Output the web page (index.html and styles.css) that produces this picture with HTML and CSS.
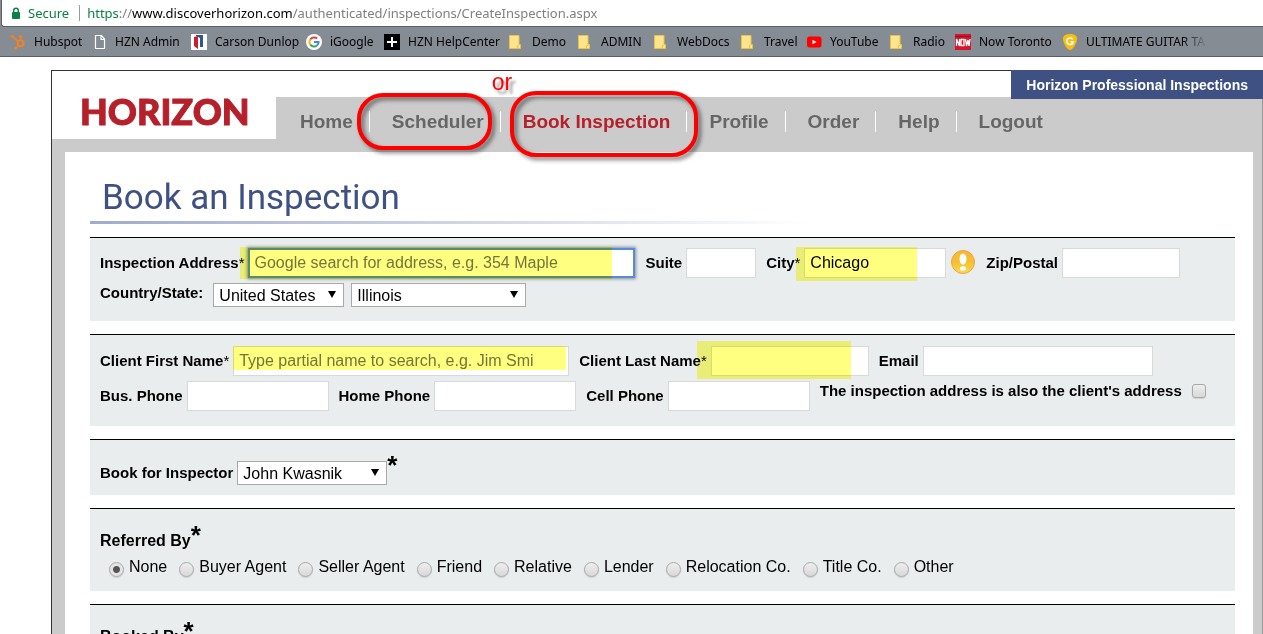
FILE: index.html
```html
<!DOCTYPE html>
<html lang="en">
<head>
<meta charset="utf-8">
<title>Book an Inspection</title>
<link rel="stylesheet" href="styles.css">
</head>
<body>
<div class="browser">
  <div class="address">
    <svg class="lock" width="10" height="13" viewBox="0 0 10 13"><rect x="1" y="5" width="8" height="7" rx="1" fill="#0b8043"/><path d="M2.7 6V3.6a2.3 2.3 0 0 1 4.6 0V6" fill="none" stroke="#0b8043" stroke-width="1.4"/></svg>
    <span class="secure">Secure</span>
    <span class="url"><span class="scheme">https</span>://<span class="host">www.discoverhorizon.com</span>/authenticated/inspections/CreateInspection.aspx</span>
  </div>
  <nav class="bookmarks" aria-label="Bookmarks">
    <a href="#"><svg width="16" height="16" viewBox="0 0 16 16" fill="none" stroke="#f58220" stroke-width="1.5"><circle cx="10.6" cy="9.3" r="3" stroke-width="2"/><path d="M10.6 6V2.5M8.3 7.5 2.5 2.6M8.4 11.5l-2.6 2.7"/><g fill="#f58220" stroke="none"><circle cx="10.6" cy="2.4" r="1.5"/><circle cx="2.3" cy="2.4" r="1.6"/><circle cx="5.6" cy="14.3" r="1.3"/></g></svg>Hubspot</a>
    <a href="#"><svg width="16" height="16" viewBox="0 0 16 16"><path d="M4.500 1.500h6l3 3.500v9.500h-9z M10 1.500v4h3.500" fill="none" stroke="#fff" stroke-width="1.2"/></svg>HZN Admin</a>
    <a href="#"><svg width="16" height="16" viewBox="0 0 16 16"><path fill="#fff" d="M0 0h16v16H0z"/><path fill="#2f5597" d="M5 1h7v12H9V4L5 2z"/><path fill="#c8202f" d="M3 3l4-1v13l-4-3z"/></svg>Carson Dunlop</a>
    <a href="#"><svg width="16" height="16" viewBox="0 0 16 16" fill="none" stroke-width="2"><circle cx="8" cy="8" r="8" fill="#fff"/><path stroke="#ea4335" d="M4.200 5.600A4.600 4.600 0 0 1 11.200 4.600"/><path stroke="#fbbc05" d="M4.200 10.500a4.700 4.700 0 0 1 0-5"/><path stroke="#34a853" d="M11 11.500a4.600 4.600 0 0 1-6.800-1"/><path stroke="#4285f4" d="M8 8h4.600a4.700 4.700 0 0 1-1.600 3.500"/></svg>iGoogle</a>
    <a href="#"><svg width="16" height="16" viewBox="0 0 16 16"><path d="M0 0h16v16H0z"/><path d="M8 3v10M3 8h10" stroke="#fff" stroke-width="2"/></svg>HZN HelpCenter</a>
    <a href="#"><svg width="16" height="16" viewBox="0 0 16 16"><path fill="#ffe48a" stroke="#e8c34c" d="M1.500 1.500h9.500v9h1.500v4h-11z"/><path d="M9.500 14.500v-3h1.500" fill="none" stroke="#e8c34c"/></svg>Demo</a>
    <a href="#"><svg width="16" height="16" viewBox="0 0 16 16"><path fill="#ffe48a" stroke="#e8c34c" d="M1.500 1.500h9.500v9h1.500v4h-11z"/><path d="M9.500 14.500v-3h1.500" fill="none" stroke="#e8c34c"/></svg>ADMIN</a>
    <a href="#"><svg width="16" height="16" viewBox="0 0 16 16"><path fill="#ffe48a" stroke="#e8c34c" d="M1.500 1.500h9.500v9h1.500v4h-11z"/><path d="M9.500 14.500v-3h1.500" fill="none" stroke="#e8c34c"/></svg>WebDocs</a>
    <a href="#"><svg width="16" height="16" viewBox="0 0 16 16"><path fill="#ffe48a" stroke="#e8c34c" d="M1.500 1.500h9.500v9h1.500v4h-11z"/><path d="M9.500 14.500v-3h1.500" fill="none" stroke="#e8c34c"/></svg>Travel</a>
    <a href="#"><svg width="16" height="16" viewBox="0 0 16 16"><rect x="1" y="2.500" width="14.500" height="11" rx="2.500" fill="#f00"/><path d="M6.500 5.800v4.400l4-2.200z" fill="#fff"/></svg>YouTube</a>
    <a href="#"><svg width="16" height="16" viewBox="0 0 16 16"><path fill="#ffe48a" stroke="#e8c34c" d="M1.500 1.500h9.500v9h1.500v4h-11z"/><path d="M9.500 14.500v-3h1.500" fill="none" stroke="#e8c34c"/></svg>Radio</a>
    <a href="#"><svg width="16" height="16" viewBox="0 0 16 16"><path fill="#d5152b" d="M0 0h16v16H0z"/><path d="M0 2.500h16" stroke="#8f1020"/><path d="M1.500 12V5l3 7V5M6 5.500h3v6H6zM10.500 5l1 7 1.500-6 1 6 1-7" fill="none" stroke="#fff" stroke-width="1.300"/></svg>Now Toronto</a>
    <a href="#" class="faded"><svg width="16" height="16" viewBox="0 0 16 16"><path fill="#f9bf0f" d="M8 0c4 0 7 1.500 7 4.500C15 9 11 16 8 16S1 9 1 4.500C1 1.500 4 0 8 0z"/><path d="M10.800 5.300A3.300 3.300 0 1 0 11.300 8H8.500" fill="none" stroke="#fff" stroke-width="1.500"/></svg><span>ULTIMATE GUITAR TA</span></a>
  </nav>
</div>

<div class="app">
  <header class="header">
    <div class="logo">HORIZON</div>
    <div class="header-main">
      <div class="strip"><div class="company">Horizon Professional Inspections</div></div>
      <nav aria-label="Main">
        <ul class="menu">
          <li><a href="#">Home</a></li>
          <li><a href="#">Scheduler</a><span class="ring ring-scheduler"></span></li>
          <li><a href="#" class="current">Book Inspection</a><span class="ring ring-book"></span><span class="or">or</span></li>
          <li><a href="#">Profile</a></li>
          <li><a href="#">Order</a></li>
          <li><a href="#">Help</a></li>
          <li><a href="#">Logout</a></li>
        </ul>
      </nav>
    </div>
  </header>

  <main class="content">
    <h1>Book an Inspection</h1>
    <form>
      <section class="panel panel-address">
        <div class="row">
          <div class="field"><label for="address">Inspection Address<sup>*</sup></label><span class="control"><input class="text w-address active" id="address" type="text" placeholder="Google search for address, e.g. 354 Maple"><span class="mark mark-address"></span></span></div>
          <div class="field"><label for="suite">Suite</label><input class="text w-suite" id="suite" type="text"></div>
          <div class="field"><label for="city">City<sup>*</sup></label><span class="control"><input class="text w-city" id="city" type="text" value="Chicago"><span class="mark mark-city"></span></span><svg class="alert" width="26" height="26" viewBox="0 0 26 26"><defs><linearGradient id="amber" x1="0" y1="0" x2="0" y2="1"><stop offset="0" stop-color="#f7b733"/><stop offset=".5" stop-color="#f5c030"/><stop offset="1" stop-color="#f9dc50"/></linearGradient></defs><circle cx="13" cy="12" r="11.500" fill="url(#amber)" stroke="#f5a04a"/><ellipse cx="13" cy="9" rx="3.500" ry="5.500" fill="#fff"/><ellipse cx="13" cy="18.500" rx="3" ry="2.200" fill="#fff"/></svg></div>
          <div class="field"><label for="zip">Zip/Postal</label><input class="text w-zip" id="zip" type="text"></div>
        </div>
        <div class="row row-country">
          <label for="country">Country/State:</label>
          <span class="pick"><select class="w-country" id="country"><option>United States</option></select></span>
          <span class="pick"><select class="w-state" id="state" aria-label="State"><option>Illinois</option></select></span>
        </div>
      </section>

      <section class="panel panel-client">
        <div class="row">
          <div class="field"><label for="first">Client First Name<sup>*</sup></label><span class="control"><input class="text w-first" id="first" type="text" placeholder="Type partial name to search, e.g. Jim Smi"><span class="mark mark-first"></span></span></div>
          <div class="field"><label for="last">Client Last Name<sup>*</sup></label><span class="control"><input class="text w-last" id="last" type="text"><span class="mark mark-last"></span></span></div>
          <div class="field"><label for="email">Email</label><input class="text w-email" id="email" type="text"></div>
        </div>
        <div class="row">
          <div class="field"><label for="bus">Bus. Phone</label><input class="text w-phone" id="bus" type="text"></div>
          <div class="field"><label for="home">Home Phone</label><input class="text w-phone" id="home" type="text"></div>
          <div class="field"><label for="cell">Cell Phone</label><input class="text w-phone" id="cell" type="text"></div>
          <div class="field field-same"><label for="same">The inspection address is also the client's address</label><input class="tick" id="same" type="checkbox"></div>
        </div>
      </section>

      <section class="panel panel-inspector">
        <div class="field"><label for="inspector">Book for Inspector</label><span class="pick"><select class="w-inspector" id="inspector"><option>John Kwasnik</option></select></span></div><span class="star">*</span>
      </section>

      <section class="panel panel-choice">
        <h2>Referred By<span class="star">*</span></h2>
        <div class="options">
          <label><input type="radio" name="ref" checked>None</label>
          <label><input type="radio" name="ref">Buyer Agent</label>
          <label><input type="radio" name="ref">Seller Agent</label>
          <label><input type="radio" name="ref">Friend</label>
          <label><input type="radio" name="ref">Relative</label>
          <label><input type="radio" name="ref">Lender</label>
          <label><input type="radio" name="ref">Relocation Co.</label>
          <label><input type="radio" name="ref">Title Co.</label>
          <label><input type="radio" name="ref">Other</label>
        </div>
      </section>

      <section class="panel panel-choice">
        <h2>Booked By<span class="star">*</span></h2>
      </section>
    </form>
  </main>
</div>
</body>
</html>
```
FILE: styles.css
```css
* { box-sizing: border-box; }
html { height: 100%; overflow: hidden; }
body {
  margin: 0;
  height: 100%;
  overflow: hidden;
  background: #fff;
  color: #000;
  font-family: "Liberation Sans", Arial, sans-serif;
  font-size: 15px;
}

/* Browser chrome */
.browser {
  background: #868c94;
  border-bottom: 1px solid #5b5e66;
  font-family: "Noto Sans", sans-serif;
}
.address {
  display: flex;
  align-items: center;
  height: 27px;
  margin-left: 1px;
  padding-left: 9px;
  background: #fff;
  border: 1px solid #5b5e66;
  border-width: 0 0 1px 1px;
  border-bottom-left-radius: 3px;
  font-size: 13px;
  white-space: nowrap;
}
.secure { margin-left: 7px; padding-right: 10px; border-right: 1px solid #9a9a9a; line-height: 16px; color: #0b8043; }
.url { margin-left: 7px; color: #808080; }
.scheme { color: #0b8043; }
.host { color: #000; }
.bookmarks {
  display: grid;
  grid-template-columns: 81px 100px 115px 78px 124px 69px 76px 87px 66px 83px 66px 107px 1fr;
  align-items: center;
  height: 29px;
  padding-left: 10px;
  font-size: 12px;
}
.bookmarks a {
  display: flex;
  align-items: center;
  gap: 8px;
  color: #000;
  text-decoration: none;
  white-space: nowrap;
}
.bookmarks svg { flex: none; }
.faded span {
  background: linear-gradient(to right, #000 80%, #777c84);
  background-clip: text;
  color: transparent;
}

/* Application frame */
.app {
  margin: 13px 0 0 51px;
  border: 1px solid #333;
  border-right-color: #999;
  border-bottom: 0;
  background: #cbcbcb;
}
.header { display: flex; align-items: flex-start; height: 81px; }
.logo {
  width: 224px;
  height: 68px;
  padding: 16px 0 0 28px;
  background: #fff;
  color: #b5202b;
  font: 900 36px/48px Lato, sans-serif;
  -webkit-text-stroke: 1px #b5202b;
}
.header-main { flex: 1; }
.strip { display: flex; justify-content: flex-end; height: 26px; background: #fff; }
.company {
  height: 29px;
  margin: -1px -1px 0 0;
  padding: 0 15px;
  background: #3f5182;
  color: #fff;
  font-size: 14px;
  font-weight: bold;
  line-height: 30px;
  white-space: nowrap;
}
.menu { display: flex; margin: 14px 0 0; padding: 0 0 0 2px; list-style: none; }
.menu li {
  position: relative;
  height: 21px;
  padding: 0 16px 0 22px;
  border-right: 1px solid #fff;
  font-size: 19px;
  font-weight: bold;
  line-height: 21px;
}
.menu li:last-child { border-right: 0; }
.menu a { color: #666; text-decoration: none; white-space: nowrap; }
.menu .current { color: #b5202b; }
.ring {
  position: absolute;
  border: 4px solid #f00;
  border-radius: 26px;
  filter: drop-shadow(3px 3px 2px rgba(0, 0, 0, .5));
  pointer-events: none;
}
.ring-scheduler { left: -13px; top: -18px; width: 135px; height: 57px; }
.ring-book { left: 9px; top: -20px; width: 188px; height: 66px; }
.or {
  position: absolute;
  left: -9px;
  top: -41px;
  color: #f00;
  font-size: 23px;
  font-weight: normal;
  line-height: 24px;
  text-shadow: 4px 4px 3px rgba(0, 0, 0, .4);
}

/* Page content */
.content { margin: 0 9px 0 13px; padding: 21px 18px 0 25px; background: #fff; }
h1 {
  margin: 0;
  padding: 0 0 0 12px;
  height: 51px;
  border-bottom: 3px solid;
  border-image: linear-gradient(to right, #a0aacb, #e3e6ee 45%, transparent 63%) 1;
  color: #3f5182;
  font: 400 35px/50px Roboto, sans-serif;
}
form { display: grid; gap: 13px; padding-top: 13px; }
.panel { padding: 10px; border-top: 1px solid #000; background: #e9edee; }
.panel-address { padding-bottom: 14px; }
.panel-client { padding: 11px 10px 15px; display: grid; gap: 5px; }
.row { display: flex; gap: 10px; }
.row-country { gap: 7px; padding-top: 5px; }
.row-country label { line-height: 20px; padding-right: 3px; }
.field { display: flex; align-items: center; gap: 4px; }
.field-same { align-self: flex-start; gap: 10px; height: 20px; }
label { font-weight: bold; line-height: 18px; white-space: nowrap; }
sup { font-size: 15px; font-weight: normal; line-height: 0; vertical-align: baseline; }
.control, .pick { position: relative; display: flex; }
.text {
  height: 30px;
  padding: 0 5px;
  border: 1px solid #d9d9d9;
  background: #fff;
  color: #000;
  font: 16px "Liberation Sans", Arial, sans-serif;
}
.text::placeholder { color: #757575; opacity: 1; }
.active { border: 2px solid #5b8ad8; padding: 0 4px; box-shadow: 0 0 3px 1px rgba(60, 80, 110, .6); }
.w-address { width: 387px; }
.w-suite { width: 70px; }
.w-city { width: 142px; }
.w-zip { width: 118px; }
.w-first { width: 336px; }
.w-last { width: 158px; }
.w-email { width: 230px; }
.w-phone { width: 142px; }
.w-country { width: 131px; }
.w-state { width: 175px; }
.w-inspector { width: 150px; }
.mark { position: absolute; background: #ffff80; mix-blend-mode: multiply; pointer-events: none; }
.mark-address { left: -8px; top: -1px; width: 372px; height: 32px; }
.mark-city { left: -8px; top: -1px; width: 121px; height: 34px; }
.mark-first { left: 0; top: 0; width: 333px; height: 24px; }
.mark-last { left: -14px; top: -5px; width: 154px; height: 38px; }
select {
  height: 24px;
  padding: 0 5px;
  border: 1px solid #a9a9a9;
  border-radius: 0;
  background: #fff;
  color: #000;
  font: 16px "Liberation Sans", Arial, sans-serif;
  appearance: none;
}
.pick::after {
  content: "";
  position: absolute;
  right: 8px;
  top: 8px;
  border: 4px solid transparent;
  border-top: 7px solid #000;
  border-bottom: 0;
}
.tick, .options input {
  appearance: none;
  flex: none;
  margin: 0;
  border: 1px solid #a8a8a8;
  background: linear-gradient(#eee, #d8d8d8);
  box-shadow: 0 1px 1px rgba(0, 0, 0, .12);
}
.tick { width: 14px; height: 14px; border-radius: 3px; }
.panel-inspector { display: flex; padding: 21px 10px 10px; }
.star { font-size: 26px; font-weight: bold; line-height: 24px; }
.panel-inspector .star { margin-top: -8px; }
.panel-choice { padding: 10px 10px 14px; }
h2 { display: flex; margin: 0; font-size: 16px; line-height: 24px; padding-top: 10px; }
h2 .star { margin-top: -6px; height: 24px; }
.options { display: flex; gap: 12px; padding: 4px 0 0 9px; }
.options label { display: flex; gap: 5px; font-size: 16px; font-weight: normal; line-height: 20px; }
.options input { width: 15px; height: 15px; margin-top: 5px; border-radius: 50%; }
.options input:checked { background: radial-gradient(circle, #555 0 3px, #e4e4e4 4px); }
```
